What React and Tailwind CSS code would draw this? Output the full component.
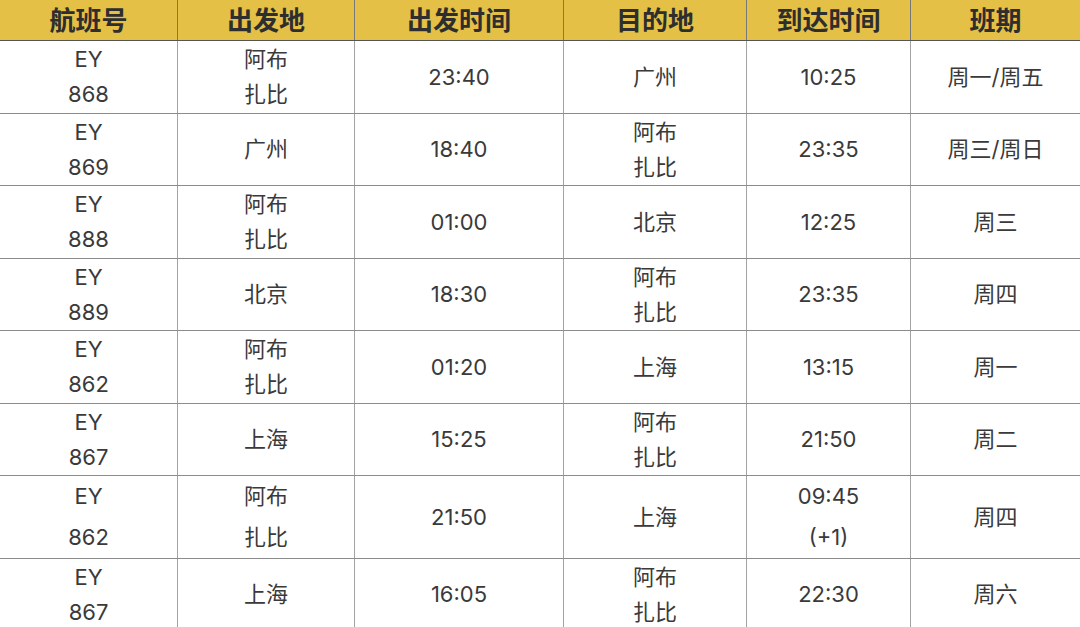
import React from "react";

const rows = [
  { h: "h-[73px]", c: [["EY", "868"], ["阿布", "扎比"], ["23:40"], ["广州"], ["10:25"], ["周一/周五"]] },
  { h: "h-[72px]", c: [["EY", "869"], ["广州"], ["18:40"], ["阿布", "扎比"], ["23:35"], ["周三/周日"]] },
  { h: "h-[73px]", c: [["EY", "888"], ["阿布", "扎比"], ["01:00"], ["北京"], ["12:25"], ["周三"]] },
  { h: "h-[72px]", c: [["EY", "889"], ["北京"], ["18:30"], ["阿布", "扎比"], ["23:35"], ["周四"]] },
  { h: "h-[73px]", c: [["EY", "862"], ["阿布", "扎比"], ["01:20"], ["上海"], ["13:15"], ["周一"]] },
  { h: "h-[72px]", c: [["EY", "867"], ["上海"], ["15:25"], ["阿布", "扎比"], ["21:50"], ["周二"]] },
  { h: "h-[83px]", tall: true, c: [["EY", "862"], ["阿布", "扎比"], ["21:50"], ["上海"], ["09:45", "(+1)"], ["周四"]] },
  { h: "h-[72px]", c: [["EY", "867"], ["上海"], ["16:05"], ["阿布", "扎比"], ["22:30"], ["周六"]] },
];

const headers = ["航班号", "出发地", "出发时间", "目的地", "到达时间", "班期"];
const grid = "grid grid-cols-[178px_177px_209px_183px_164px_169px]";

export default function App() {
  return (
    <div className="w-[1080px] h-[627px] overflow-hidden bg-white text-[#3a3a3a] font-['Inter','Noto_Sans_CJK_SC',sans-serif]">
      <div className={`${grid} h-[41px] bg-[#e4c046] border-b border-[#555]`}>
        {headers.map((t, i) => (
          <div
            key={i}
            className={`flex items-center justify-center text-[26px] font-bold text-[#2e2e2e] ${i < 5 ? "border-r border-[#777]" : ""}`}
          >
            {t}
          </div>
        ))}
      </div>
      {rows.map((r, ri) => (
        <div key={ri} className={`${grid} ${r.h} border-b border-[#8c8c8c]`}>
          {r.c.map((lines, ci) => (
            <div
              key={ci}
              className={`flex flex-col items-center justify-center text-[22px] ${r.tall ? "leading-[41px]" : "leading-[35px]"} ${ci < 5 ? "border-r border-[#a3a3a3]" : ""}`}
            >
              {lines.map((l, li) => (
                <span key={li}>{l}</span>
              ))}
            </div>
          ))}
        </div>
      ))}
    </div>
  );
}
